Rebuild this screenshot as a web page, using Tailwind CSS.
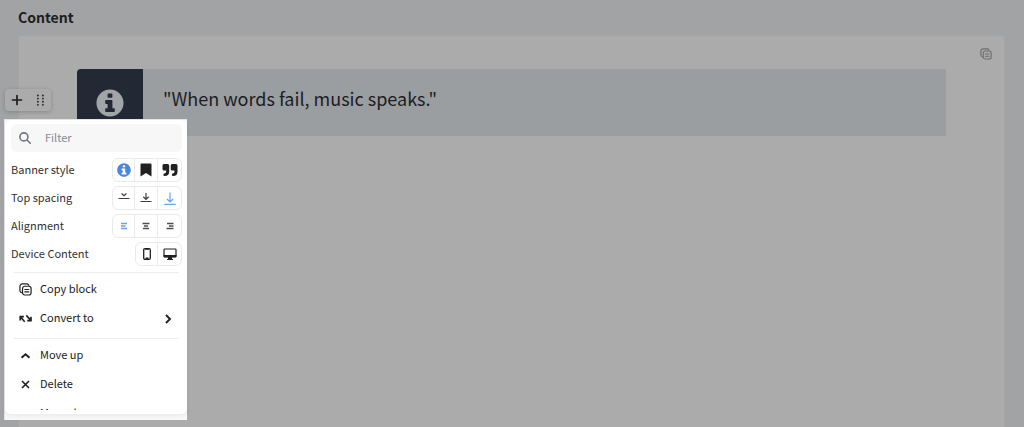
<!DOCTYPE html>
<html lang="en">
<head>
  <meta charset="UTF-8"/>
  <meta name="viewport" content="width=device-width,initial-scale=1.0"/>
  <title>Content editor</title>
  <script src="https://cdn.jsdelivr.net/npm/@tailwindcss/browser@4"></script>
</head>
<body class="font-['Noto_Sans_CJK_SC','Noto_Sans',sans-serif] bg-[#a2a3a5] text-[#1c1d1f] h-screen overflow-hidden">

  <!-- icons used more than once -->
  <svg class="hidden">
    <symbol id="icon-info" viewBox="0 0 512 512">
      <path fill="currentColor" fill-rule="evenodd" d="M256 8C119 8 8 119 8 256s111 248 248 248 248-111 248-248S393 8 256 8zM226 80h60q14 0 14 14v50q0 14-14 14h-60q-14 0-14-14V94q0-14 14-14zM182 200h104q14 0 14 14v136h30q14 0 14 14v44q0 14-14 14H182q-14 0-14-14v-44q0-14 14-14h30v-78h-30q-14 0-14-14v-44q0-14 14-14z"/>
    </symbol>
    <symbol id="icon-copy" viewBox="0 0 14 14">
      <g fill="none" stroke="currentColor" stroke-width="1.3" stroke-linecap="round">
        <path d="M2.600 10.300A2.400 2.400 0 0 1 1 8V3.600A2.600 2.600 0 0 1 3.600 1h4.700a2.400 2.400 0 0 1 2.200 1.300"/>
        <rect x="3.800" y="3.500" width="9.200" height="9.400" rx="2.400"/>
        <path d="M6.300 7h4.200M6.300 9.600h4.200"/>
      </g>
    </symbol>
  </svg>

  <main class="relative flex flex-col h-full pl-[18px] pr-[19px]">
    <h1 class="py-[7px] text-[14px] leading-[21px] font-bold">Content</h1>

    <!-- EDITOR CARD -->
    <section class="relative flex-1 bg-[#ababab] rounded-t border border-b-0 border-[#a5a5a6] px-[58px] pt-[33px]">
      <button aria-label="Copy content" class="absolute top-3 right-3 text-[#6c6c6c]">
        <svg class="w-3 h-3"><use href="#icon-copy"/></svg>
      </button>

      <!-- BANNER -->
      <div class="flex h-[67px] rounded-l-sm overflow-hidden bg-[#9a9ea1]">
        <div class="w-[66px] flex items-center justify-center bg-[#222935] text-[#a2a5a8]">
          <svg class="w-7 h-7"><use href="#icon-info"/></svg>
        </div>
        <p class="pl-5 pt-[15px] text-[18px] leading-7">"When words fail, music speaks."</p>
      </div>
    </section>

    <!-- BLOCK TOOLBAR -->
    <div class="absolute left-[5px] top-[89px] w-[46px] h-[22px] flex items-center justify-around rounded bg-[#ababab] shadow-[0_1px_4px_rgba(0,0,0,0.2)]">
      <button aria-label="Add block">
        <svg class="w-3 h-3" viewBox="0 0 12 12" fill="none" stroke="currentColor" stroke-width="1.700" stroke-linecap="round">
          <path d="M6 1.500v9M1.500 6h9"/>
        </svg>
      </button>
      <button aria-label="Block settings">
        <svg class="w-3 h-3" viewBox="0 0 12 12" fill="currentColor">
          <circle cx="3.900" cy="1.500" r=".9"/><circle cx="8.900" cy="1.500" r=".9"/>
          <circle cx="3.900" cy="4.600" r=".9"/><circle cx="8.900" cy="4.600" r=".9"/>
          <circle cx="3.900" cy="7.700" r=".9"/><circle cx="8.900" cy="7.700" r=".9"/>
          <circle cx="3.900" cy="10.800" r=".9"/><circle cx="8.900" cy="10.800" r=".9"/>
        </svg>
      </button>
    </div>

    <!-- BLOCK MENU -->
    <div class="absolute left-1 top-[119px] w-[183px] h-[301px] bg-[#f8f8f9] border-l border-t border-[#e4e5ea]">
      <div class="h-[294px] rounded-md bg-white pl-[6px] pr-[5px] pt-1 shadow-[0_2px_4px_rgba(0,0,0,0.06)] text-[11px] leading-[17px]">
        <div class="h-[286px] overflow-hidden">
          <label class="flex items-center h-7 px-2 rounded-md bg-[#f7f7f7] text-[#707684]">
            <svg class="w-3 h-3 shrink-0" viewBox="0 0 12 12" fill="none" stroke="currentColor" stroke-width="1.600" stroke-linecap="round">
              <circle cx="4.900" cy="4.900" r="4"/>
              <path d="M8 8l3.300 3.300"/>
            </svg>
            <input type="text" aria-label="Filter" placeholder="Filter" class="min-w-0 flex-1 h-7 pb-[2px] ml-[14px] bg-transparent outline-none placeholder:text-[#848995]"/>
          </label>

          <div class="mt-[6px] space-y-1 text-[#303030]">
            <div class="flex items-center justify-between h-6">
              <span class="pb-[2px]">Banner style</span>
              <div class="flex h-6 border border-[#eaeaea] rounded-md divide-x divide-[#eaeaea] text-[#202020]">
                <button aria-label="Info" class="w-[22px] flex items-center justify-center text-[#4a86e0]">
                  <svg class="w-[14px] h-[14px]"><use href="#icon-info"/></svg>
                </button>
                <button aria-label="Bookmark" class="w-[23px] flex items-center justify-center">
                  <svg class="w-3 h-[14px]" viewBox="0 0 12 14" fill="currentColor"><path d="M.5 1.500Q.5.500 1.500.500h9q1 0 1 1v12L6 10 .5 13.500z"/></svg>
                </button>
                <button aria-label="Quote" class="w-[23px] flex items-center justify-center">
                  <svg class="w-4 h-[14px]" viewBox="0 0 16 14" fill="currentColor">
                    <path d="M1.800 1h3.700Q7.200 1 7.200 2.500V8.500Q7.200 13 2.500 13H2.200Q1.500 13 1.500 12.300V11.200Q1.500 10.600 2.200 10.500Q4.200 10.400 4.200 8.500V7.500H1.800Q.5 7.500.5 6.200V2.500Q.5 1 1.800 1zM10.100 1H14Q15.500 1 15.500 2.500V8.500Q15.500 13 11 13H10.700Q10 13 10 12.300V11.200Q10 10.600 10.700 10.500Q12.500 10.400 12.500 8.500V7.500H10.100Q8.700 7.500 8.700 6.200V2.500Q8.700 1 10.100 1z"/>
                  </svg>
                </button>
              </div>
            </div>

            <div class="flex items-center justify-between h-6">
              <span class="pb-[2px]">Top spacing</span>
              <div class="flex h-6 border border-[#eaeaea] rounded-md divide-x divide-[#eaeaea] text-[#3c3c3c]">
                <button aria-label="Small spacing" class="w-[22px] flex items-center justify-center">
                  <svg class="w-3 h-[14px]" viewBox="0 0 12 14" fill="none" stroke="currentColor" stroke-width="1.200"><path d="M.5 7.500h11M3.600 2.500L6 4.700l2.400-2.200"/></svg>
                </button>
                <button aria-label="Medium spacing" class="w-[23px] flex items-center justify-center">
                  <svg class="w-3 h-[14px]" viewBox="0 0 12 14" fill="none" stroke="currentColor" stroke-width="1.200"><path d="M.5 10.500h11M6 2v6.300M3.300 5.800L6 8.400l2.700-2.600"/></svg>
                </button>
                <button aria-label="Large spacing" class="w-[23px] flex items-center justify-center text-[#6aa0ec]">
                  <svg class="w-3 h-[14px]" viewBox="0 0 12 14" fill="none" stroke="currentColor" stroke-width="1.200"><path d="M.2 13.300h11.600M6 1.500v9.200M3 8l3 2.900L9 8"/></svg>
                </button>
              </div>
            </div>

            <div class="flex items-center justify-between h-6">
              <span class="pb-[2px]">Alignment</span>
              <div class="flex h-6 border border-[#eaeaea] rounded-md divide-x divide-[#eaeaea] text-[#505050]">
                <button aria-label="Align left" class="w-[22px] flex items-center justify-center text-[#6aa0ec]">
                  <svg class="w-2 h-2" viewBox="0 0 8 8" stroke="currentColor" stroke-width="1.400"><path d="M1 1.500h6M1 4h4.500M1 6.500h6"/></svg>
                </button>
                <button aria-label="Align center" class="w-[23px] flex items-center justify-center">
                  <svg class="w-2 h-2" viewBox="0 0 8 8" stroke="currentColor" stroke-width="1.400"><path d="M.5 1.500h7M2 4h4M1 6.500h6"/></svg>
                </button>
                <button aria-label="Align right" class="w-[23px] flex items-center justify-center">
                  <svg class="w-2 h-2" viewBox="0 0 8 8" stroke="currentColor" stroke-width="1.400"><path d="M1 1.500h6.500M3 4h4.500M.5 6.500h7"/></svg>
                </button>
              </div>
            </div>

            <div class="flex items-center justify-between h-6">
              <span class="pb-[2px]">Device Content</span>
              <div class="flex h-6 border border-[#eaeaea] rounded-md divide-x divide-[#eaeaea] text-[#202020]">
                <button aria-label="Mobile" class="w-[22px] flex items-center justify-center">
                  <svg class="w-2 h-3" viewBox="0 0 8 12">
                    <rect x=".7" y=".7" width="6.600" height="10.600" rx="1.200" fill="none" stroke="currentColor" stroke-width="1.300"/>
                    <path d="M2 1h4M2.500 10.300h3" stroke="currentColor" stroke-width="1.400"/>
                  </svg>
                </button>
                <button aria-label="Desktop" class="w-[23px] flex items-center justify-center">
                  <svg class="w-[14px] h-3" viewBox="0 0 14 12">
                    <rect x="1" y="1" width="12" height="7.600" rx=".8" fill="none" stroke="currentColor" stroke-width="1.200"/>
                    <path d="M.5 7h13v1.500q0 1-1 1h-11q-1 0-1-1zM5 9h4v2h1v1H4v-1h1z" fill="currentColor"/>
                  </svg>
                </button>
              </div>
            </div>
          </div>

          <hr class="mt-[6px] mx-[3px] border-[#eeeeee]"/>

          <div class="pt-[2px] text-[#202020]">
            <button class="flex items-center w-full h-[29px] pl-2 text-left">
              <svg class="w-[13px] h-[13px] mr-2"><use href="#icon-copy"/></svg>
              <span class="pb-[2px]">Copy block</span>
            </button>
            <button class="flex items-center w-full h-[29px] pl-2 text-left">
              <svg class="w-[13px] h-[13px] mr-2" viewBox="0 0 13 13" fill="none" stroke="currentColor" stroke-width="1.600">
                <path d="M1.200 8.400V4.600h3.700M1.400 4.800l4.300 4.900M12 4.800v3.800H8.200M11.800 8.400L7.300 3.400"/>
              </svg>
              <span class="pb-[2px]">Convert to</span>
              <svg class="w-2 h-[10px] ml-auto mr-[10px]" viewBox="0 0 8 10" fill="none" stroke="currentColor" stroke-width="1.900"><path d="M2 1l4 4-4 4"/></svg>
            </button>
          </div>

          <hr class="mt-[5px] mx-[3px] border-[#eeeeee]"/>

          <div class="pt-[2px] text-[#202020]">
            <button class="flex items-center w-full h-[29px] pl-2 text-left">
              <svg class="w-[13px] h-[13px] mr-2" viewBox="0 0 13 13" fill="none" stroke="currentColor" stroke-width="1.900"><path d="M2.500 8.800l4-3.600 4 3.600"/></svg>
              <span class="pb-[2px]">Move up</span>
            </button>
            <button class="flex items-center w-full h-[29px] pl-2 text-left">
              <svg class="w-[13px] h-[13px] mr-2" viewBox="0 0 13 13" fill="none" stroke="currentColor" stroke-width="1.600"><path d="M3 3l7 7M10 3l-7 7"/></svg>
              <span class="pb-[2px]">Delete</span>
            </button>
            <button class="flex items-center w-full h-[29px] pl-2 text-left">
              <svg class="w-[13px] h-[13px] mr-2" viewBox="0 0 13 13" fill="none" stroke="currentColor" stroke-width="1.700"><path d="M2.500 6l4 3.600 4-3.600"/></svg>
              <span class="pb-[2px]">Move down</span>
            </button>
          </div>
        </div>
      </div>
    </div>
  </main>

</body>
</html>
